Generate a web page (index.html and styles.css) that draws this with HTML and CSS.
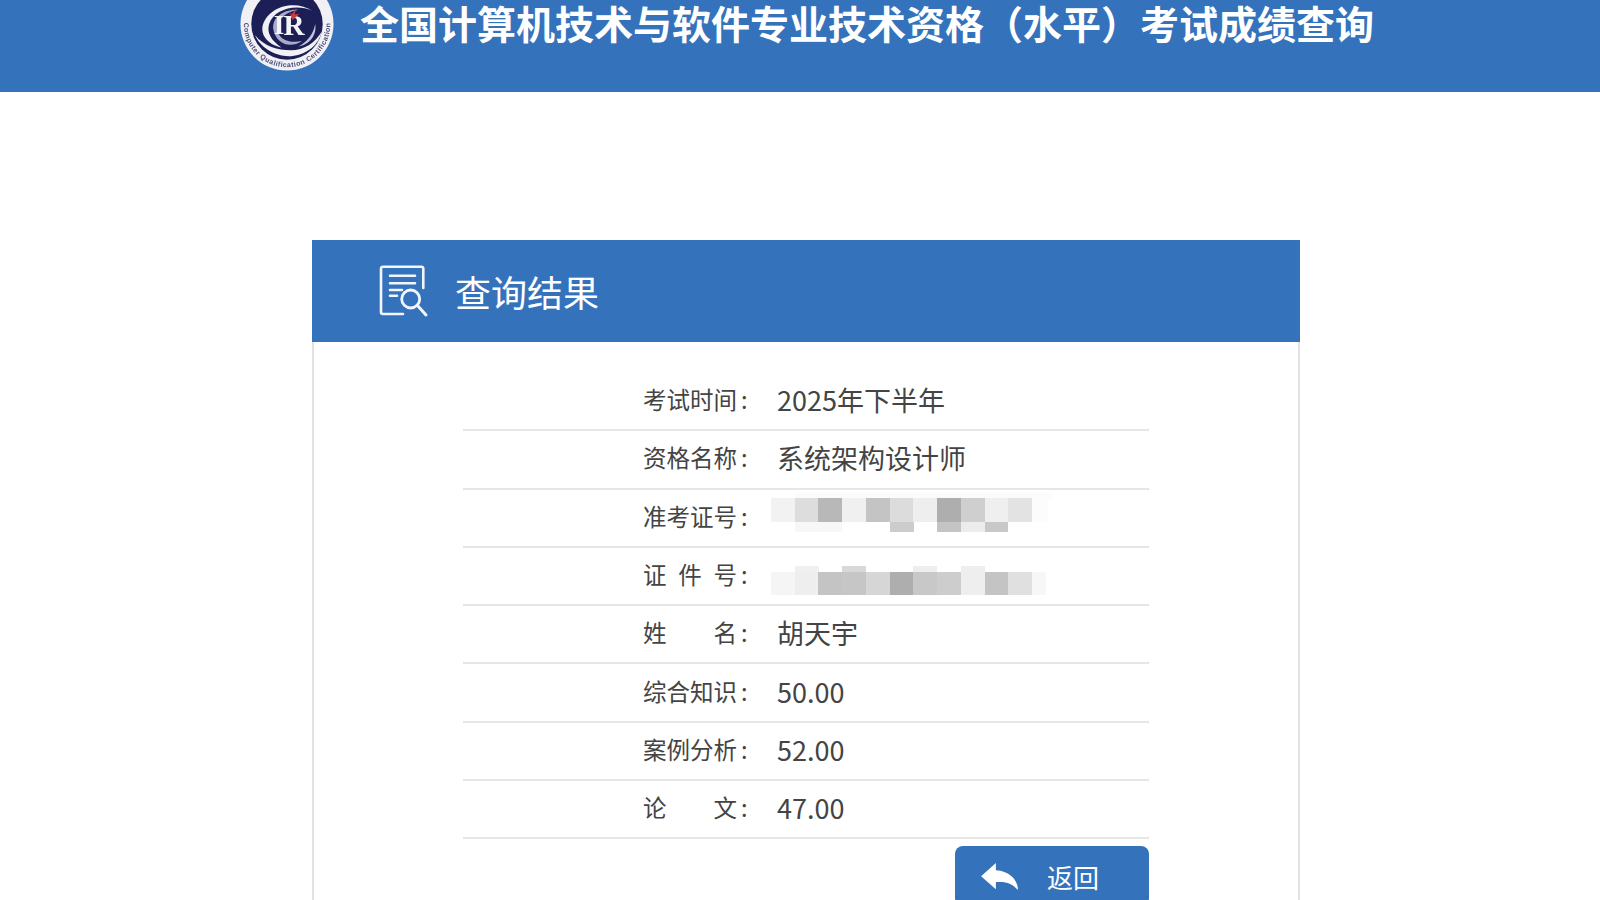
FILE: index.html
```html
<!DOCTYPE html>
<html lang="zh-CN">
<head>
<meta charset="UTF-8">
<meta name="viewport" content="width=device-width, initial-scale=1.0">
<title>全国计算机技术与软件专业技术资格（水平）考试成绩查询</title>
<link rel="stylesheet" href="styles.css">
</head>
<body>

<header class="top-bar">
  <svg class="logo" viewBox="0 0 100 100" aria-hidden="true">
    <defs>
      <path id="ringText" d="M5.600 38 A46 46 0 1 0 94.400 38"/>
    </defs>
    <circle cx="50" cy="50" r="49.500" fill="#f1f1f5"/>
    <circle cx="50" cy="50" r="38" fill="#1c1f56"/>
    <text class="logo-ring"><textPath href="#ringText" startOffset="50%" text-anchor="middle">Computer Qualification Certification</textPath></text>
    <path d="M77 36 C60 24 30 30 24 52 C22 64 32 72 44 75 C34 68 28 60 31 50 C36 34 60 28 77 36 Z" fill="#f0f0f5"/>
    <path d="M16 62 C22 76 40 86 56 84 C72 82 84 72 87 58 C80 70 68 78 54 78 C40 78 26 74 16 62 Z" fill="#f0f0f5"/>
    <path d="M36 58 C32 44 46 34 62 35 C50 36 40 44 40 56 C41 66 52 71 66 68 C54 76 40 72 36 58 Z" fill="#a9acc6"/>
    <path d="M62 74 C74 72 82 62 80 50 C78 62 70 70 62 74 Z" fill="#c4c6d8"/>
    <text class="logo-mark" x="36" y="61">I<tspan class="logo-r" dx="-1" dy="1">R</tspan></text>
    <path d="M52 36 L55 40 L60 33 L58 40 L63 39 L56 46 Z" fill="#cf3a3e"/>
  </svg>
  <h1 class="site-title">全国计算机技术与软件专业技术资格（水平）考试成绩查询</h1>
</header>

<main class="page">
  <section class="card">
    <div class="card-head">
      <svg class="card-icon" viewBox="0 0 50 56" fill="none" stroke="#f2f5fb" stroke-linecap="round" stroke-linejoin="round" aria-hidden="true">
        <path d="M44.300 25 V5.500 a1.800 1.800 0 0 0 -1.800 -1.800 H4 a2 2 0 0 0 -2 2 V49 a2 2 0 0 0 2 2 H24" stroke-width="2.600"/>
        <path d="M11 12.700 H36 M11 20.300 H36 M11 27 H23 M11 32.700 H18" stroke-width="2.600"/>
        <circle cx="31.700" cy="36" r="9" stroke-width="2.800"/>
        <path d="M38.500 42.500 L47 52" stroke-width="3"/>
      </svg>
      <h2 class="card-title">查询结果</h2>
    </div>

    <div class="result">
      <div class="row"><span class="label"><span class="label-text">考试时间</span><span class="colon">:</span></span><span class="value">2025年下半年</span></div>
      <div class="row"><span class="label"><span class="label-text">资格名称</span><span class="colon">:</span></span><span class="value">系统架构设计师</span></div>
      <div class="row">
        <span class="label"><span class="label-text">准考证号</span><span class="colon">:</span></span>
        <svg class="mosaic mosaic-ticket" viewBox="0 0 280 52" aria-hidden="true">
          <rect x="24" y="0" width="256" height="6" fill="#fbfbfb"/>
          <rect x="0" y="5" width="24" height="24" fill="#f2f2f2"/>
          <rect x="24" y="5" width="24" height="24" fill="#dddddd"/>
          <rect x="47" y="5" width="24" height="24" fill="#b8b8b8"/>
          <rect x="71" y="5" width="24" height="24" fill="#f0f0f0"/>
          <rect x="95" y="5" width="24" height="24" fill="#c4c4c4"/>
          <rect x="119" y="5" width="24" height="24" fill="#dcdcdc"/>
          <rect x="142" y="5" width="24" height="24" fill="#eeeeee"/>
          <rect x="166" y="5" width="24" height="24" fill="#aeaeae"/>
          <rect x="190" y="5" width="24" height="24" fill="#cfcfcf"/>
          <rect x="214" y="5" width="24" height="24" fill="#efefef"/>
          <rect x="237" y="5" width="24" height="24" fill="#e3e3e3"/>
          <rect x="261" y="5" width="16" height="24" fill="#fcfcfc"/>
          <rect x="24" y="29" width="47" height="10" fill="#f7f7f7"/>
          <rect x="119" y="29" width="24" height="10" fill="#cccccc"/>
          <rect x="166" y="29" width="24" height="10" fill="#c4c4c4"/>
          <rect x="190" y="29" width="24" height="10" fill="#ececec"/>
          <rect x="214" y="29" width="23" height="10" fill="#c8c8c8"/>
        </svg>
      </div>
      <div class="row">
        <span class="label"><span class="label-text">证 件 号</span><span class="colon">:</span></span>
        <svg class="mosaic mosaic-id" viewBox="0 0 280 36" aria-hidden="true">
          <rect x="24" y="0" width="24" height="6" fill="#f0f0f0"/>
          <rect x="71" y="0" width="24" height="6" fill="#d8d8d8"/>
          <rect x="142" y="0" width="24" height="6" fill="#eeeeee"/>
          <rect x="190" y="0" width="24" height="6" fill="#eeeeee"/>
          <rect x="0" y="6" width="24" height="23" fill="#f5f5f5"/>
          <rect x="24" y="6" width="24" height="23" fill="#eeeeee"/>
          <rect x="47" y="6" width="24" height="23" fill="#c4c4c4"/>
          <rect x="71" y="6" width="24" height="23" fill="#c6c6c6"/>
          <rect x="95" y="6" width="24" height="23" fill="#d6d6d6"/>
          <rect x="119" y="6" width="24" height="23" fill="#aeaeae"/>
          <rect x="142" y="6" width="24" height="23" fill="#c8c8c8"/>
          <rect x="166" y="6" width="24" height="23" fill="#cdcdcd"/>
          <rect x="190" y="6" width="24" height="23" fill="#eeeeee"/>
          <rect x="214" y="6" width="23" height="23" fill="#c4c4c4"/>
          <rect x="237" y="6" width="24" height="23" fill="#e0e0e0"/>
          <rect x="261" y="6" width="14" height="23" fill="#f7f7f7"/>
        </svg>
      </div>
      <div class="row"><span class="label"><span class="label-text">姓 名</span><span class="colon">:</span></span><span class="value">胡天宇</span></div>
      <div class="row"><span class="label"><span class="label-text">综合知识</span><span class="colon">:</span></span><span class="value">50.00</span></div>
      <div class="row"><span class="label"><span class="label-text">案例分析</span><span class="colon">:</span></span><span class="value">52.00</span></div>
      <div class="row"><span class="label"><span class="label-text">论 文</span><span class="colon">:</span></span><span class="value">47.00</span></div>
    </div>

    <div class="actions">
      <button class="back-btn" type="button">
        <svg class="back-icon" viewBox="0 0 112 82" aria-hidden="true">
          <path d="M0 40 L45 0 V22 C85 24 112 50 112 82 C95 62 75 55 45 58 V80 Z" fill="#fff"/>
        </svg>
        <span>返回</span>
      </button>
    </div>
  </section>
</main>

</body>
</html>
```

FILE: styles.css
```css
body {
  margin: 0;
  height: 900px;
  overflow: hidden;
  background: #fff;
  color: #444;
  font-family: "Noto Sans CJK SC", "Noto Sans", sans-serif;
}

.top-bar {
  display: flex;
  align-items: flex-start;
  height: 92px;
  padding-left: 240px;
  background: #3572bc;
  overflow: hidden;
}

.logo {
  flex: none;
  width: 94px;
  height: 94px;
  margin-top: -23px;
  filter: blur(0.4px);
}

.logo-ring {
  font-family: "Liberation Sans", sans-serif;
  font-size: 7.500px;
  font-weight: 700;
  letter-spacing: 0.5px;
  fill: #4a4d78;
}

.logo-mark {
  font-family: "Liberation Serif", serif;
  font-size: 29px;
  font-weight: 700;
  fill: #f4f4f8;
}

.logo-r {
  font-size: 31px;
}

.site-title {
  margin: 0 0 0 26px;
  color: #fff;
  font-size: 39px;
  font-weight: 700;
  line-height: 44px;
  white-space: nowrap;
}

.page {
  padding: 148px 0 0 312px;
}

.card {
  width: 988px;
  height: 700px;
  box-sizing: border-box;
  border: 2px solid #e2e2e2;
  border-top: 0;
}

.card-head {
  display: flex;
  align-items: center;
  height: 102px;
  margin: 0 -2px;
  padding-left: 67px;
  background: #3572bc;
}

.card-icon {
  flex: none;
  width: 50px;
  height: 56px;
}

.card-title {
  margin: 0 0 0 26px;
  color: #fff;
  font-size: 36px;
  font-weight: 400;
  line-height: 50px;
}

.result {
  margin: 31px 0 0 149px;
  width: 686px;
}

.row {
  display: flex;
  align-items: center;
  height: 56.300px;
  padding-left: 180px;
  border-bottom: 2px solid #e6e6e6;
}

.label {
  display: flex;
  flex: none;
  width: 134px;
  font-size: 23.500px;
  line-height: 30px;
  margin-top: -4px;
}

.label-text {
  width: 94px;
  text-align: justify;
  text-align-last: justify;
}

.colon {
  margin-left: 4px;
}

.value {
  font-size: 27px;
  line-height: 36px;
  white-space: nowrap;
  margin-top: -2px;
}

.mosaic {
  display: block;
  flex: none;
  width: 280px;
  margin-left: -6px;
}

.mosaic-ticket {
  height: 52px;
  margin-top: 3px;
}

.mosaic-id {
  height: 36px;
  margin-top: 15px;
}

.actions {
  display: flex;
  justify-content: flex-end;
  width: 686px;
  margin: 7px 0 0 149px;
}

.back-btn {
  display: flex;
  align-items: center;
  width: 194px;
  height: 60px;
  padding: 0 0 0 26px;
  border: 0;
  border-radius: 8px;
  background: #3572bc;
  color: #fff;
  font-family: inherit;
  font-size: 26px;
  align-self: flex-start;
}

.back-icon {
  flex: none;
  width: 37px;
  height: 27px;
  margin: 0 29px 0 0;
}
```
